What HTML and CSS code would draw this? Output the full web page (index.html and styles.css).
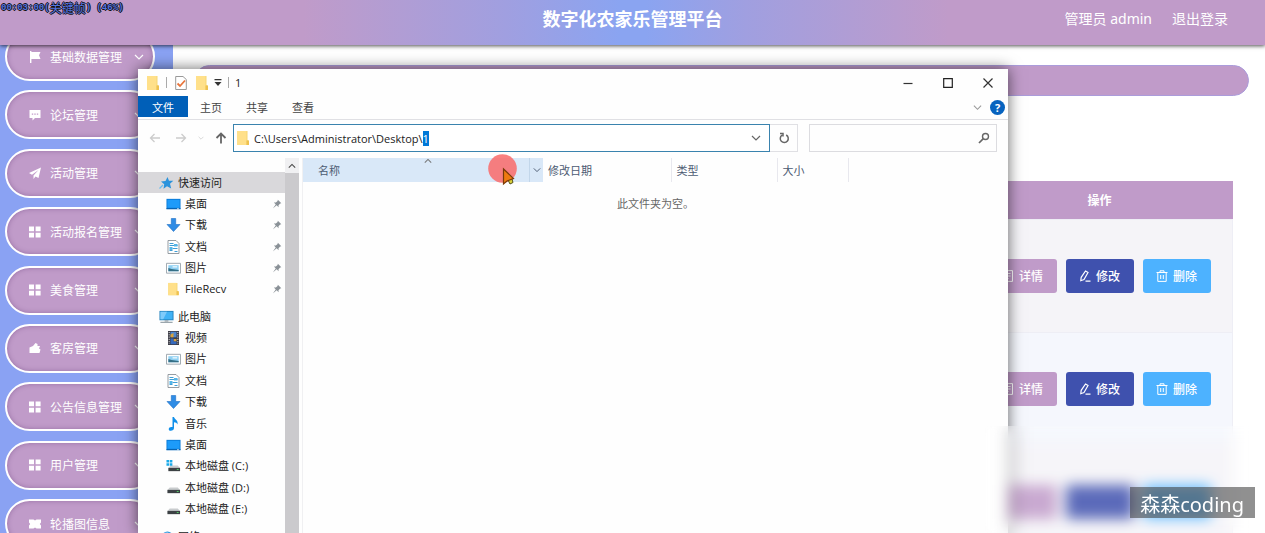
FILE: index.html
```html
<!DOCTYPE html>
<html lang="zh-CN">
<head>
<meta charset="utf-8">
<title>数字化农家乐管理平台</title>
<link rel="stylesheet" href="styles.css">
</head>
<body>
<svg class="defs" aria-hidden="true">
  <symbol id="i-grid" viewBox="0 0 12 12"><path fill="currentColor" d="M0 .6h5v4.6H0zM6.600 .6h5v4.600h-5zM0 6.800h5v4.600H0zM6.600 6.800h5v4.600h-5z"/></symbol>
  <symbol id="i-flag" viewBox="0 0 12 12"><path fill="currentColor" d="M1 0h1.400v1H11.500L10 4.200l1.500 3.800H2.400V12H1z"/></symbol>
  <symbol id="i-chat" viewBox="0 0 12 12"><path fill="currentColor" fill-rule="evenodd" d="M.5 1h11v8H6l-2.500 2.500V9h-3zM2.800 4.400v1.400h1.400V4.400zM5.300 4.400v1.400h1.400V4.400zM7.800 4.400v1.400h1.400V4.400z"/></symbol>
  <symbol id="i-plane" viewBox="0 0 12 12"><path fill="currentColor" d="M12 .5 0 6l3 1.800L9.500 3 4.500 8.500V12l2-2.400L9.500 11z"/></symbol>
  <symbol id="i-room" viewBox="0 0 12 12"><path fill="currentColor" d="M.5 5.500 4 4l2.500-3L8.500 2v2H11L10 6.500l1.500 1L10.500 11H.5z"/></symbol>
  <symbol id="i-ticket" viewBox="0 0 12 12"><path fill="currentColor" d="M0 1.500h4.500L6 2.500l1.500-1H12v3L10.800 6 12 7.500v3H7.500L6 9.500l-1.500 1H0v-3L1.200 6 0 4.500z"/></symbol>
  <symbol id="i-down" viewBox="0 0 10 10"><path fill="none" stroke="currentColor" stroke-width="1.200" d="M1 3l4 4 4-4"/></symbol>
  <symbol id="i-up" viewBox="0 0 10 10"><path fill="none" stroke="currentColor" stroke-width="1.300" d="M1 7l4-4 4 4"/></symbol>
  <symbol id="i-folder" viewBox="0 0 14 16"><path fill="#f5d675" d="M1 1h10.500v9l1.500 1v4H1z"/><path fill="#ffe08a" d="M1 1h9.500v14H1z"/><path fill="#eec14f" d="M10.500 10.500H13V15h-2.500z"/></symbol>
  <symbol id="i-check" viewBox="0 0 12 16"><path fill="#fff" stroke="#999" d="M.7 1.500H8l3.300 3v10H.7z"/><path fill="none" stroke="#e8753c" stroke-width="1.800" d="M2.500 8.500 5 11l5-5.500"/></symbol>
  <symbol id="i-star" viewBox="0 0 14 14"><path fill="#2b93dc" d="M8 1l1.500 3.700 4.300.1-3.300 3 1.200 4.700L7.500 10.300 4 12.800l.7-4.600L1.500 5.400l4.500-.5z"/><path d="M0 12.500l3.500-3.500" stroke="#6bbdf0" stroke-width="1.300"/></symbol>
  <symbol id="i-desk" viewBox="0 0 16 14"><path fill="#0a7bd8" d="M.5 1.500h15v11H.5z"/><path fill="#1d9bfa" d="M1.500 2.500h13v8.500h-13z"/><path fill="#075da8" d="M.5 11.500h15v1H.5z"/><path fill="#fff" d="M12 11.500h1.500v1H12z"/></symbol>
  <symbol id="i-dl" viewBox="0 0 14 14"><path fill="#2f8ce5" stroke="#1e6fc4" stroke-width=".6" d="M4.800.5h4.400v6h4.300L7 13.500.5 6.500h4.300z"/></symbol>
  <symbol id="i-doc" viewBox="0 0 14 14"><path fill="#fff" stroke="#8a9299" stroke-width=".9" d="M1.500.5h8l3 3v10h-11z"/><path stroke="#3e9ed6" d="M3 3.500h4M3 5.500h8M6 8.500h5M3 10.500h3M8 11.500h3"/><path fill="#55b5e8" d="M3 7h3v3H3zM7.500 4H11v2.500H7.500z"/></symbol>
  <symbol id="i-pic" viewBox="0 0 16 14"><path fill="#fff" stroke="#9aa4ac" d="M.5 2h15v10.500H.5z"/><path fill="#8fd0f3" d="M2.500 4h11v6.500h-11z"/><path fill="#356f86" d="M2.500 7 6 8l7.500 1v1.500h-11z"/><path fill="#e8f6fc" d="M7 5h5v1.500H7z"/></symbol>
  <symbol id="i-pc" viewBox="0 0 16 14"><path fill="#2583bd" d="M.5.500h15v10H.5z"/><path fill="#41b2f5" d="M1.500 1.500h13v8h-13z"/><path fill="#7fcbfa" d="M1.500 1.500h7l-4 8h-3z"/><path fill="#9ba6ad" d="M6 10.500h4v1.200H6zM1.500 12h13v1.500h-13z"/></symbol>
  <symbol id="i-video" viewBox="0 0 14 14"><path fill="#3d3d47" d="M1.500 0h11v14h-11z"/><path fill="#4c86cf" d="M4 .8h6v5.500H4z"/><path fill="#d9a23a" d="M4 3.500l3-1.500v4.300H4zM7 8h3v2.500H7z"/><path fill="#3469bd" d="M4 7.500h3v5.700H4zM7 10.500h3v2.700H7z"/><path stroke="#ddd" stroke-dasharray="1 1.300" d="M2.700 1v12M11.300 1v12"/></symbol>
  <symbol id="i-music" viewBox="0 0 14 14"><path fill="#1190ea" d="M6 0h1.500c.3 2.500 4.500 3 3.500 7.500C10.500 6 9 5.500 7.500 5.300V11c0 1.800-1.500 2.800-3.200 2.800-3 0-2.600-3.800.5-3.800H6z"/></symbol>
  <symbol id="i-disk" viewBox="0 0 16 14"><path fill="#c9ccce" d="M4 6.500h8.500L15 9H1.500z"/><path fill="#3c4144" d="M1.500 9H15v3.500H1.500z"/><path fill="#56d56a" d="M11.500 10.300h2v1h-2z"/></symbol>
  <symbol id="i-disk-c" viewBox="0 0 16 14"><path fill="#c9ccce" d="M5 6.500h7.500L15 9H2.500z"/><path fill="#3c4144" d="M2.500 9H15v3.500H2.500z"/><path fill="#56d56a" d="M11.500 10.300h2v1h-2z"/><path fill="#19a9e8" d="M.5.500h2.800v2.800H.5zM4 .5h2.800v2.800H4zM.5 4h2.800v2.800H.5zM4 4h2.800v2.800H4z"/></symbol>
  <symbol id="i-net" viewBox="0 0 16 14"><circle cx="9" cy="7" r="6" fill="#2d94dc"/><path fill="#83cdf4" d="M6 2.500 10 2l-2 4-4 1z"/></symbol>
  <symbol id="i-pin" viewBox="0 0 12 12"><path fill="#8a9197" d="M7 .8 11.200 5l-1.400.4-2 2.100.1 2.400L5.600 7.600 1 11.500l3.500-5L2.300 4.200l2.400.1 2-2z"/></symbol>
  <symbol id="i-back" viewBox="0 0 12 12"><path fill="none" stroke="currentColor" stroke-width="1.300" d="M11 6H1.500M5.500 2l-4 4 4 4"/></symbol>
  <symbol id="i-fwd" viewBox="0 0 12 12"><path fill="none" stroke="currentColor" stroke-width="1.300" d="M1 6h9.500M6.500 2l4 4-4 4"/></symbol>
  <symbol id="i-top" viewBox="0 0 12 12"><path fill="none" stroke="currentColor" stroke-width="1.800" d="M6 11.500V1.500M1.500 6 6 1.500 10.500 6"/></symbol>
  <symbol id="i-reload" viewBox="0 0 12 12"><path fill="none" stroke="currentColor" stroke-width="1.500" d="M8.200 3A4 4 0 1 1 4 3.200M2 1.500h3v3"/></symbol>
  <symbol id="i-search" viewBox="0 0 12 12"><circle cx="7.500" cy="4.500" r="3" fill="none" stroke="currentColor" stroke-width="1.400"/><path stroke="currentColor" stroke-width="1.700" d="M5.300 6.700 1 11"/></symbol>
  <symbol id="i-info" viewBox="0 0 12 12"><path fill="none" stroke="currentColor" d="M1.500.6h9v10.800h-9zM3.500 3.500h5M3.500 6h5M3.500 8.500h3"/></symbol>
  <symbol id="i-edit" viewBox="0 0 12 12"><path fill="none" stroke="currentColor" stroke-width="1.200" d="M6.500 1 9 2.500 5 9.500l-3.200 1.200.4-3.400zM6.500 11.200H11.500"/></symbol>
  <symbol id="i-trash" viewBox="0 0 12 12"><path fill="none" stroke="currentColor" d="M.5 2.500h11M4 2.300V.8h4v1.500M1.800 2.500v8.900h8.400V2.500M4.700 5v4M7.300 5v4"/></symbol>
</svg>

<header class="topbar">
  <h1 class="brand">数字化农家乐管理平台</h1>
  <nav class="account"><a href="#">管理员 admin</a><a href="#">退出登录</a></nav>
</header>

<div class="page">
  <aside class="sidebar">
    <nav class="menu">
      <a class="pill" href="#"><svg><use href="#i-flag"/></svg><span>基础数据管理</span><svg class="chev"><use href="#i-down"/></svg></a>
      <a class="pill" href="#"><svg><use href="#i-chat"/></svg><span>论坛管理</span><svg class="chev"><use href="#i-down"/></svg></a>
      <a class="pill" href="#"><svg><use href="#i-plane"/></svg><span>活动管理</span><svg class="chev"><use href="#i-down"/></svg></a>
      <a class="pill" href="#"><svg><use href="#i-grid"/></svg><span>活动报名管理</span><svg class="chev"><use href="#i-down"/></svg></a>
      <a class="pill" href="#"><svg><use href="#i-grid"/></svg><span>美食管理</span><svg class="chev"><use href="#i-down"/></svg></a>
      <a class="pill" href="#"><svg><use href="#i-room"/></svg><span>客房管理</span><svg class="chev"><use href="#i-down"/></svg></a>
      <a class="pill" href="#"><svg><use href="#i-grid"/></svg><span>公告信息管理</span><svg class="chev"><use href="#i-down"/></svg></a>
      <a class="pill" href="#"><svg><use href="#i-grid"/></svg><span>用户管理</span><svg class="chev"><use href="#i-down"/></svg></a>
      <a class="pill" href="#"><svg><use href="#i-ticket"/></svg><span>轮播图信息</span><svg class="chev"><use href="#i-down"/></svg></a>
    </nav>
  </aside>
  <main class="main">
    <div class="crumb"></div>
    <table class="records">
      <colgroup><col><col class="col-ops"></colgroup>
      <thead><tr><th></th><th>操作</th></tr></thead>
      <tbody>
        <tr><td></td><td><div class="ops"><button class="btn detail"><svg><use href="#i-info"/></svg>详情</button><button class="btn edit"><svg><use href="#i-edit"/></svg>修改</button><button class="btn remove"><svg><use href="#i-trash"/></svg>删除</button></div></td></tr>
        <tr><td></td><td><div class="ops"><button class="btn detail"><svg><use href="#i-info"/></svg>详情</button><button class="btn edit"><svg><use href="#i-edit"/></svg>修改</button><button class="btn remove"><svg><use href="#i-trash"/></svg>删除</button></div></td></tr>
        <tr><td></td><td><div class="ops"><button class="btn detail"></button><button class="btn edit"></button><button class="btn remove"></button></div></td></tr>
      </tbody>
    </table>
  </main>
</div>

<section class="window" aria-label="1">
  <div class="titlebar">
    <svg class="fold"><use href="#i-folder"/></svg><i class="sep"></i>
    <svg class="fold tick"><use href="#i-check"/></svg><svg class="fold"><use href="#i-folder"/></svg>
    <svg class="caret" viewBox="0 0 8 8"><path fill="#333" d="M.5 0h7v1.200h-7zM.5 3h7L4 7z"/></svg><i class="sep"></i>
    <span class="title">1</span>
    <div class="controls">
      <button aria-label="最小化"><svg viewBox="0 0 10 10"><path stroke="#333" stroke-width="1.200" d="M.5 5.500h9"/></svg></button>
      <button aria-label="最大化"><svg viewBox="0 0 10 10"><path fill="none" stroke="#222" stroke-width="1.200" d="M.7.7h8.600v8.600H.7z"/></svg></button>
      <button aria-label="关闭"><svg viewBox="0 0 10 10"><path stroke="#333" stroke-width="1.200" d="M.5.5l9 9M9.500.5l-9 9"/></svg></button>
    </div>
  </div>
  <div class="tabs">
    <button class="tab file">文件</button><button class="tab">主页</button><button class="tab">共享</button><button class="tab">查看</button>
    <div class="help"><svg class="chev"><use href="#i-down"/></svg><button class="ask" aria-label="帮助">?</button></div>
  </div>
  <div class="addressbar">
    <div class="arrows"><svg><use href="#i-back"/></svg><svg><use href="#i-fwd"/></svg><svg class="mini"><use href="#i-down"/></svg><svg class="dark"><use href="#i-top"/></svg></div>
    <div class="path"><svg class="fold"><use href="#i-folder"/></svg><input id="path" aria-label="地址" value="C:\Users\Administrator\Desktop\1" spellcheck="false"><svg class="chev"><use href="#i-down"/></svg></div>
    <button class="reload" aria-label="刷新"><svg><use href="#i-reload"/></svg></button>
    <div class="search"><input aria-label="搜索"><svg><use href="#i-search"/></svg></div>
  </div>
  <div class="body">
    <nav class="tree">
      <div class="group six">
        <a class="node root current" href="#"><svg><use href="#i-star"/></svg><span>快速访问</span></a>
        <a class="node" href="#"><svg><use href="#i-desk"/></svg><span>桌面</span><svg class="pin"><use href="#i-pin"/></svg></a>
        <a class="node" href="#"><svg><use href="#i-dl"/></svg><span>下载</span><svg class="pin"><use href="#i-pin"/></svg></a>
        <a class="node" href="#"><svg><use href="#i-doc"/></svg><span>文档</span><svg class="pin"><use href="#i-pin"/></svg></a>
        <a class="node" href="#"><svg><use href="#i-pic"/></svg><span>图片</span><svg class="pin"><use href="#i-pin"/></svg></a>
        <a class="node" href="#"><svg><use href="#i-folder"/></svg><span>FileRecv</span><svg class="pin"><use href="#i-pin"/></svg></a>
      </div>
      <div class="group ten">
        <a class="node root" href="#"><svg><use href="#i-pc"/></svg><span>此电脑</span></a>
        <a class="node" href="#"><svg><use href="#i-video"/></svg><span>视频</span></a>
        <a class="node" href="#"><svg><use href="#i-pic"/></svg><span>图片</span></a>
        <a class="node" href="#"><svg><use href="#i-doc"/></svg><span>文档</span></a>
        <a class="node" href="#"><svg><use href="#i-dl"/></svg><span>下载</span></a>
        <a class="node" href="#"><svg><use href="#i-music"/></svg><span>音乐</span></a>
        <a class="node" href="#"><svg><use href="#i-desk"/></svg><span>桌面</span></a>
        <a class="node" href="#"><svg><use href="#i-disk-c"/></svg><span>本地磁盘 (C:)</span></a>
        <a class="node" href="#"><svg><use href="#i-disk"/></svg><span>本地磁盘 (D:)</span></a>
        <a class="node" href="#"><svg><use href="#i-disk"/></svg><span>本地磁盘 (E:)</span></a>
      </div>
      <div class="group last">
        <a class="node root" href="#"><svg><use href="#i-net"/></svg><span>网络</span></a>
      </div>
    </nav>
    <div class="scroll"><svg><use href="#i-up"/></svg><div class="thumb"></div></div>
    <div class="files">
      <table class="listing">
        <colgroup><col class="c-name"><col class="c-date"><col class="c-type"><col class="c-size"><col></colgroup>
        <thead><tr>
          <th class="sorted"><div class="cell"><span>名称</span><svg class="sort"><use href="#i-up"/></svg><span class="drop"><svg><use href="#i-down"/></svg></span></div></th>
          <th>修改日期</th><th>类型</th><th>大小</th><th class="rest"></th>
        </tr></thead>
        <tbody><tr><td colspan="5">此文件夹为空。</td></tr></tbody>
      </table>
    </div>
  </div>
</section>

<div class="haze"></div>
<svg class="pointer" viewBox="0 0 30 32"><circle cx="14.500" cy="14.500" r="14.300" fill="#f96a6a" fill-opacity=".85"/><path fill="#d9d13a" stroke="#55501c" d="M19 24l3 6 3-1.500-1.500-5z"/><path fill="#ee7a10" stroke="#7a3a08" stroke-width="1.200" d="M15.500 15v15l3.500-3 6.500-2.500z"/></svg>
<div class="stamp"><span>00:03:00(</span><span class="cjk">关键帧</span><span>) (46%)</span></div>
<div class="mark">森森coding</div>
<script src="script.js"></script>
</body>
</html>
```
FILE: styles.css
```css
* { box-sizing: border-box; }
body {
  margin: 0;
  height: 100vh;
  overflow: hidden;
  display: flex;
  flex-direction: column;
  background: #fff;
  font-family: "Open Sans", "Noto Sans CJK SC", sans-serif;
  font-size: 11px;
  color: #222;
}
a { color: inherit; text-decoration: none; }
button, input { font: inherit; color: inherit; border: 0; padding: 0; background: none; }
input { outline: none; min-width: 0; }
svg { flex: none; display: block; }
.defs { position: absolute; width: 0; height: 0; }

.topbar {
  position: relative;
  z-index: 1;
  flex: none;
  height: 45px;
  padding: 0 37px 8px;
  display: grid;
  grid-template-columns: 1fr auto 1fr;
  align-items: center;
  color: #fff;
  background: linear-gradient(90deg, #c09bc9 24%, #a09fe0 40%, #8aa4f1 49%, #8aa4f1 51%, #a09fe0 59%, #c09bc9 75%);
  box-shadow: 0 1px 4px rgba(0, 0, 0, .7);
}
.brand { grid-column: 2; margin: 0; font-size: 18px; line-height: 26px; font-weight: 700; }
.account { display: flex; justify-content: flex-end; gap: 20px; font: 14px/20px "Noto Sans", "Noto Sans CJK SC", sans-serif; }

.page { flex: 1; min-height: 0; display: flex; }
.sidebar { flex: none; width: 173px; padding: 0 18px 0 5px; background: #8aa2f3; }
.menu {
  height: 516px;
  margin-top: -13px;
  display: flex;
  flex-direction: column;
  justify-content: space-between;
}
.pill {
  height: 49px;
  padding: 0 9px 0 22px;
  display: flex;
  align-items: center;
  border: 2px solid #fff;
  border-radius: 25px;
  background: #c09bc9;
  box-shadow: inset 0 0 5px rgba(90, 50, 110, .4);
  color: #fff;
  font-size: 12px;
}
.pill svg { width: 12px; height: 12px; margin-right: 9px; }
.pill .chev { width: 10px; height: 10px; margin: 0 0 0 auto; }

.main { flex: 1; padding: 20px 16px 0 21px; }
.crumb {
  height: 31px;
  border: 1px solid #ab9cdb;
  border-radius: 16px;
  background: #c09bc9;
}
.records {
  width: calc(100% - 32px);
  margin: 85px 16px 0;
  border-collapse: collapse;
  table-layout: fixed;
}
.col-ops { width: 266px; }
.records th { height: 38px; padding: 0; background: #c09bc9; color: #fff; font-size: 12px; }
.records td { height: 113px; padding: 0; border: 1px solid #eeeef5; background: #f5f7fd; }
.records tr:nth-child(odd) td { background: #f5f4f8; }
.ops { display: flex; justify-content: center; gap: 9px; }
.btn {
  width: 68px;
  height: 34px;
  display: flex;
  align-items: center;
  justify-content: center;
  gap: 5px;
  border-radius: 3px;
  color: #fff;
  font-size: 12px;
  font-weight: 500;
}
.btn svg { width: 12px; height: 12px; }
.detail { background: #c09bc9; }
.edit { background: #3f51ae; }
.remove { background: #4db2ff; }

.window {
  position: absolute;
  z-index: 2;
  left: 138px;
  top: 69px;
  width: 870px;
  bottom: 0;
  display: flex;
  flex-direction: column;
  background: #fefefe;
  box-shadow: 0 0 14px rgba(0, 0, 0, .6);
}
.fold { width: 14px; height: 16px; }
.titlebar { height: 27px; flex: none; display: flex; align-items: center; gap: 8px; padding-left: 8px; }
.tick { width: 12px; margin-left: 2px; }
.sep { width: 1px; height: 11px; background: #aaa; margin: 0 -2px; }
.caret { width: 8px; height: 8px; margin-left: -3px; }
.title { font-size: 11px; }
.controls { margin-left: auto; display: flex; }
.controls button { width: 40px; height: 27px; display: grid; place-items: center; }
.controls svg { width: 10px; height: 10px; }
.tabs { flex: none; height: 24px; display: flex; align-items: flex-start; border-bottom: 1px solid #e0e0e4; }
.tab { width: 46px; height: 21px; color: #444; }
.file { width: 50px; background: #005fb8; color: #fff; }
.help { margin-left: auto; display: flex; align-items: center; gap: 8px; padding: 4px 3px 0 0; color: #999; }
.help .chev { width: 9px; height: 9px; }
.ask { width: 15px; height: 15px; border-radius: 50%; background: #0763bf; color: #fff; font-weight: 700; line-height: 15px; }
.addressbar { flex: none; height: 38px; padding: 4px 11px 6px 11px; display: flex; }
.arrows { width: 84px; display: flex; align-items: center; gap: 14px; color: #ccc; }
.arrows svg { width: 12px; height: 12px; }
.arrows .mini { width: 6px; height: 6px; margin: 0 -3px; }
.arrows .dark { color: #666; }
.path {
  flex: 1;
  display: flex;
  align-items: center;
  gap: 4px;
  padding: 0 8px 0 2px;
  border: 1px solid #3a83ae;
  color: #222;
  background: #fff;
}
.path input { flex: 1; }
.path .chev { width: 10px; height: 10px; color: #666; }
input::selection { background: #0078d7; color: #fff; }
.reload { width: 28px; border: 1px solid #e0e0e4; border-left: 0; display: grid; place-items: center; color: #666; }
.reload svg { width: 12px; height: 12px; }
.search { width: 188px; margin-left: 11px; border: 1px solid #dcdce0; display: flex; align-items: center; padding-right: 6px; color: #666; }
.search input { flex: 1; }
.search svg { width: 12px; height: 12px; }

.body { flex: 1; min-height: 0; display: flex; overflow: hidden; }
.tree { width: 147px; padding-top: 14px; display: flex; flex-direction: column; gap: 6px; }
.group { display: grid; grid-auto-rows: 1fr; flex: none; }
.six { height: 128px; }
.ten { height: 214px; }
.last { height: 22px; }
.node { display: flex; align-items: center; gap: 4px; padding: 0 3px 0 28px; min-height: 0; line-height: 16px; white-space: nowrap; }
.node svg { width: 15px; height: 14px; }
.root { padding-left: 21px; }
.current { background: #d9d8db; }
.node .pin { width: 10px; height: 10px; margin-left: auto; }
.scroll { width: 14px; display: flex; flex-direction: column; background: #f0f0f2; color: #444; }
.scroll svg { width: 8px; height: 8px; margin: 4px 3px 3px; }
.thumb { flex: 1; background: #cbcacd; }
.files { flex: 1; margin-left: 3px; border-left: 1px solid #f0f0f2; }
.listing { width: 100%; border-collapse: collapse; table-layout: fixed; color: #4c5b72; }
.c-name { width: 240px; }
.c-date { width: 128px; }
.c-type { width: 106px; }
.c-size { width: 71px; }
.listing th { height: 24px; padding: 0 0 0 5px; text-align: left; font-weight: 400; border-right: 1px solid #e8e8ee; }
.listing .rest { border: 0; }
.listing .sorted { padding-left: 15px; background: #d9e8f8; border: 0; }
.cell { display: flex; align-items: center; }
.sort { width: 8px; height: 8px; margin: -18px 97px 0 auto; color: #777; }
.drop { height: 24px; width: 14px; display: grid; place-items: center; border-left: 1px solid #c2d6ea; }
.drop svg { width: 8px; height: 8px; }
.listing td { height: 41px; padding: 0; text-align: center; color: #666; }

.haze {
  position: absolute;
  z-index: 3;
  left: 985px;
  right: 0;
  top: 426px;
  bottom: 0;
  background: rgba(255, 255, 255, .15);
  backdrop-filter: blur(7px);
}
.pointer { position: absolute; z-index: 4; left: 488px; top: 154px; width: 30px; height: 32px; }
.stamp {
  position: absolute;
  z-index: 4;
  left: 1px;
  top: 1px;
  display: flex;
  align-items: center;
  white-space: pre;
  font: 700 9px/14px "Liberation Mono", monospace;
  color: #5474e0;
  text-shadow: 1px 0 #111, -1px 0 #111, 0 1px #111, 0 -1px #111;
}
.stamp .cjk { font: 400 12px/14px "Noto Sans CJK SC", sans-serif; }
.mark {
  position: absolute;
  z-index: 4;
  right: 10px;
  bottom: 15px;
  padding: 4px 11px 0 10px;
  font: 20px/27px "Noto Sans", "Noto Sans CJK SC", sans-serif;
  color: #fff;
  background: rgba(70, 70, 70, .6);
}
```
FILE: script.js
```javascript
const path = document.getElementById('path');
path.focus();
path.setSelectionRange(path.value.length - 1, path.value.length);
```
